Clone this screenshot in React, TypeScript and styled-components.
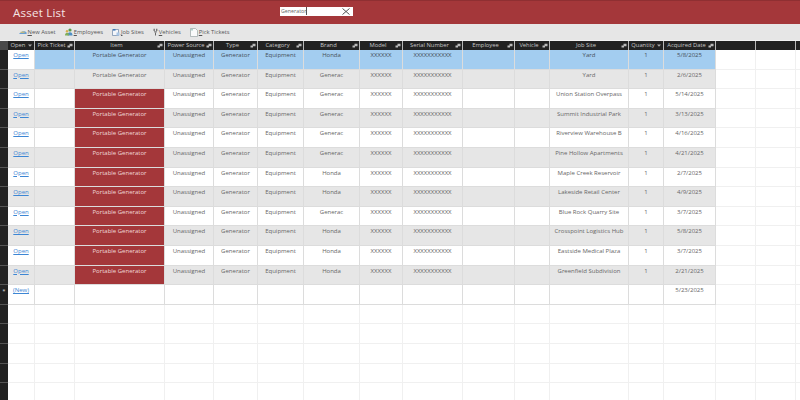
import styled, { createGlobalStyle } from 'styled-components'

const FONT = '"Open Sans", "Noto Sans", sans-serif'
const COLUMNS = '27px 40px 90px 49px 44px 46px 56px 43px 60px 52px 35px 79px 35px 52px 40px 40px 40px'
const ROW_H = 19.6

const GlobalStyle = createGlobalStyle`
  html, body { margin: 0; padding: 0; background: #fff; overflow: hidden; }
  body { font-family: ${FONT}; }
`

const Page = styled.div`
  width: 800px;
  height: 400px;
  display: flex;
  flex-direction: column;
  overflow: hidden;
`

const TitleBar = styled.header`
  height: 24px;
  flex: none;
  box-sizing: border-box;
  border-top: 1px solid #8f2f32;
  background: #a4373a;
  display: flex;
  align-items: center;
  padding-left: 13px;
`

const Title = styled.h1`
  width: 267px;
  margin: 0;
  color: #f4e4e4;
  font-size: 11.6px;
  font-weight: 400;
  letter-spacing: 0.2px;
`

const SearchBox = styled.div`
  width: 73px;
  height: 9px;
  margin-top: -3px;
  background: #fff;
  display: flex;
  align-items: center;
  justify-content: space-between;
  padding: 0 3px 0 1px;
  box-sizing: border-box;
`

const SearchText = styled.span`
  font-size: 5.3px;
  color: #666;
  border-right: 1px solid #555;
  line-height: 8px;
`

const Toolbar = styled.nav`
  height: 17px;
  flex: none;
  box-sizing: border-box;
  background: #e6e6e6;
  border-bottom: 1px solid #f2f2f2;
  display: flex;
  align-items: center;
  gap: 9px;
  padding-left: 18.5px;
`

const ToolButton = styled.span`
  display: flex;
  align-items: center;
  gap: 1px;
  font-size: 5.8px;
  color: #555;
`

const Key = styled.span`
  text-decoration: underline;
`

const Sheet = styled.div`
  flex: 1;
  display: flex;
  min-height: 0;
`

const SelectorColumn = styled.div`
  width: 8px;
  flex: none;
  background: #222;
  display: flex;
  flex-direction: column;
`

const SelectorHead = styled.div`
  height: 9px;
  flex: none;
  background: #4a4a4a;
`

const SelectorCell = styled.div`
  height: ${ROW_H}px;
  flex: none;
  box-sizing: border-box;
  border-bottom: 1px solid #555;
  display: flex;
  align-items: center;
  justify-content: center;
  padding-bottom: 6px;
  color: #ddd;
  font-size: 6px;
  line-height: 1;
`

const Grid = styled.div`
  flex: 1;
  min-width: 0;
`

const HeaderRow = styled.div`
  height: 9px;
  display: grid;
  grid-template-columns: ${COLUMNS};
  background: #222;
`

const HeaderCell = styled.div<{ $plain?: boolean }>`
  position: relative;
  box-sizing: border-box;
  border-right: 1px solid #b8b8b8;
  color: #c8c8c8;
  font-size: 5.8px;
  line-height: 9px;
  text-align: center;
  white-space: nowrap;
  padding-right: ${p => (p.$plain ? 0 : 6)}px;
`

const HeaderIcon = styled.svg`
  position: absolute;
  right: 1px;
  top: 1.5px;
  width: 6px;
  height: 5px;
`

const Row = styled.div`
  height: ${ROW_H}px;
  display: grid;
  grid-template-columns: ${COLUMNS};
`

const Cell = styled.div<{ $tone: string }>`
  box-sizing: border-box;
  border-right: 1px solid ${p => (p.$tone === 'blank' ? '#f0f0f0' : '#dcdcdc')};
  border-bottom: 1px solid ${p => (p.$tone === 'blank' ? '#f0f0f0' : '#dcdcdc')};
  background: ${p =>
    p.$tone === 'selected' ? '#a3cdf0'
    : p.$tone === 'alt' ? '#e6e6e6'
    : p.$tone === 'flag' ? '#a4373a'
    : '#fff'};
  color: ${p => (p.$tone === 'flag' ? '#f0d8d8' : p.$tone === 'selected' ? '#465059' : '#666')};
  font-size: 6px;
  line-height: 9px;
  padding-top: 1px;
  text-align: center;
  white-space: nowrap;
  overflow: hidden;
`

const OpenLink = styled.a`
  color: #3d86d4;
  text-decoration: underline;
`

type Asset = { brand: string; site: string; date: string; flagged: boolean }

const assets: Asset[] = [
  { brand: 'Honda', site: 'Yard', date: '5/8/2025', flagged: false },
  { brand: 'Generac', site: 'Yard', date: '2/6/2025', flagged: false },
  { brand: 'Generac', site: 'Union Station Overpass', date: '5/14/2025', flagged: true },
  { brand: 'Generac', site: 'Summit Industrial Park', date: '3/13/2025', flagged: true },
  { brand: 'Generac', site: 'Riverview Warehouse B', date: '4/16/2025', flagged: true },
  { brand: 'Generac', site: 'Pine Hollow Apartments', date: '4/21/2025', flagged: true },
  { brand: 'Honda', site: 'Maple Creek Reservoir', date: '2/7/2025', flagged: true },
  { brand: 'Honda', site: 'Lakeside Retail Center', date: '4/9/2025', flagged: true },
  { brand: 'Generac', site: 'Blue Rock Quarry Site', date: '3/7/2025', flagged: true },
  { brand: 'Honda', site: 'Crosspoint Logistics Hub', date: '5/8/2025', flagged: true },
  { brand: 'Honda', site: 'Eastside Medical Plaza', date: '3/7/2025', flagged: true },
  { brand: 'Honda', site: 'Greenfield Subdivision', date: '2/21/2025', flagged: true }
]

const headers = ['Open', 'Pick Ticket', 'Item', 'Power Source', 'Type', 'Category', 'Brand', 'Model', 'Serial Number', 'Employee', 'Vehicle', 'Job Site', 'Quantity', 'Acquired Date']

const FilterIcon = ({ arrow }: { arrow: boolean }) => (
  <HeaderIcon viewBox="0 0 6 5">
    {arrow
      ? <path d="M1 1.5h4L3 3.8z" fill="#aaa" />
      : <path d="M0.5 2.5h2.5v2H0.5zM2.5 0.8h3v2.4h-3z" fill="#bbb" />}
  </HeaderIcon>
)

const NewAssetIcon = () => (
  <svg width="8" height="7" viewBox="0 0 10 8">
    <path d="M0.5 5l4-2.5h3l2 1.5v2h-9z" fill="#6a9fd0" />
    <path d="M2 3h5v1.2h-5z" fill="#e8c65a" />
  </svg>
)

const EmployeesIcon = () => (
  <svg width="8" height="8" viewBox="0 0 8 8">
    <circle cx="5" cy="2" r="1.6" fill="#5a9a4a" />
    <path d="M2.5 7.5c0-2.5 1-3.2 2.5-3.2s2.5.7 2.5 3.2z" fill="#4f8fc4" />
    <circle cx="2" cy="3.2" r="1.2" fill="#d6ae4c" />
    <path d="M0 7.5c0-2 .8-2.8 2-2.8s2 .8 2 2.8z" fill="#7fae5a" />
  </svg>
)

const JobSitesIcon = () => (
  <svg width="8" height="8" viewBox="0 0 8 8">
    <path d="M0.5 1.5h6v6h-6z" fill="#f4f6fa" stroke="#6c86a8" strokeWidth="0.7" />
    <path d="M1 1h2.5v1.6h-2.5z" fill="#3f78b8" />
    <path d="M4.5 4.5h3v3h-3z" fill="#a9c6e6" />
  </svg>
)

const VehiclesIcon = () => (
  <svg width="5" height="8" viewBox="0 0 5 8">
    <path d="M0.5 0.8h1.4v2.2h-1.4zM3 0.8h1.4v2.2h-1.4z" fill="#777" />
    <path d="M1 3h3v1.5h-3z" fill="#999" />
    <path d="M2 4.5h1v3h-1z" fill="#666" />
  </svg>
)

const PickTicketsIcon = () => (
  <svg width="8" height="9" viewBox="0 0 8 9">
    <path d="M0.5 0.5h5l2 2v6h-7z" fill="#fafafa" stroke="#9aa5a5" strokeWidth="0.7" />
    <path d="M1 1h2v1.5h-2z" fill="#a8d0c8" />
  </svg>
)

const App = () => {
  return (
    <Page>
      <GlobalStyle />
      <TitleBar>
        <Title>Asset List</Title>
        <SearchBox>
          <SearchText>Generator</SearchText>
          <svg width="8" height="7" viewBox="0 0 8 7">
            <path d="M0.5 0.5L7.5 6.5M7.5 0.5L0.5 6.5" stroke="#444" strokeWidth="0.9" />
          </svg>
        </SearchBox>
      </TitleBar>
      <Toolbar>
        <ToolButton><NewAssetIcon /><span><Key>N</Key>ew Asset</span></ToolButton>
        <ToolButton><EmployeesIcon /><span><Key>E</Key>mployees</span></ToolButton>
        <ToolButton><JobSitesIcon /><span><Key>J</Key>ob Sites</span></ToolButton>
        <ToolButton><VehiclesIcon /><span><Key>V</Key>ehicles</span></ToolButton>
        <ToolButton><PickTicketsIcon /><span><Key>P</Key>ick Tickets</span></ToolButton>
      </Toolbar>
      <Sheet>
        <SelectorColumn>
          <SelectorHead />
          {Array.from({ length: 18 }, (_, i) => (
            <SelectorCell key={i}>{i === 12 ? '*' : ''}</SelectorCell>
          ))}
        </SelectorColumn>
        <Grid>
          <HeaderRow>
            {headers.map(h => (
              <HeaderCell key={h}>
                {h}
                <FilterIcon arrow={h === 'Open' || h === 'Quantity'} />
              </HeaderCell>
            ))}
            <HeaderCell $plain />
            <HeaderCell $plain />
            <HeaderCell $plain />
          </HeaderRow>
          {assets.map((a, i) => {
            const tone = i === 0 ? 'selected' : i % 2 === 1 ? 'alt' : 'plain'
            const values = ['Unassigned', 'Generator', 'Equipment', a.brand, 'XXXXXX', 'XXXXXXXXXXX', '', '', a.site, '1', a.date]
            return (
              <Row key={i}>
                <Cell $tone={i === 0 ? 'plain' : tone}><OpenLink>Open</OpenLink></Cell>
                <Cell $tone={tone} />
                <Cell $tone={a.flagged ? 'flag' : tone}>Portable Generator</Cell>
                {values.map((v, j) => <Cell key={j} $tone={tone}>{v}</Cell>)}
                <Cell $tone="blank" />
                <Cell $tone="blank" />
                <Cell $tone="blank" />
              </Row>
            )
          })}
          <Row>
            <Cell $tone="plain"><OpenLink>(New)</OpenLink></Cell>
            {Array.from({ length: 12 }, (_, j) => <Cell key={j} $tone="plain" />)}
            <Cell $tone="plain">5/23/2025</Cell>
            <Cell $tone="blank" />
            <Cell $tone="blank" />
            <Cell $tone="blank" />
          </Row>
          {Array.from({ length: 5 }, (_, i) => (
            <Row key={i}>
              {Array.from({ length: 17 }, (_, j) => <Cell key={j} $tone="blank" />)}
            </Row>
          ))}
        </Grid>
      </Sheet>
    </Page>
  )
}

export default App
